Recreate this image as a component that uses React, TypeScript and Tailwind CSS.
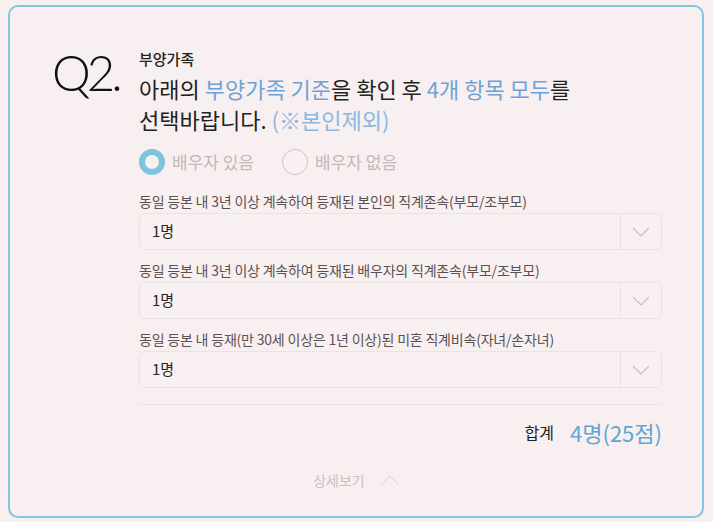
import React, { useState } from 'react';

const KR = { fontFamily: '"Noto Sans CJK KR", "Noto Sans", sans-serif' };

const ChevronDown = () => (
  <svg width="20" height="12" viewBox="0 0 20 12" fill="none">
    <path d="M2 2 L10 10 L18 2" stroke="#c9bfbf" strokeWidth="1.2" />
  </svg>
);

const ChevronUp = () => (
  <svg width="22" height="12" viewBox="0 0 22 12" fill="none">
    <path d="M2 11 L11 2 L20 11" stroke="#e6dcdc" strokeWidth="1.2" />
  </svg>
);

interface FieldProps {
  label: React.ReactNode;
  value: string;
}

const Field: React.FC<FieldProps> = ({ label, value }) => (
  <div className="flex flex-col">
    <div className="text-[14px] leading-[18px] text-[#5a5252] mb-[3px] tracking-[-0.2px]">{label}</div>
    <div className="flex h-[37px] rounded-[6px] border border-[#ebe2e3] bg-[#f8f0f1]">
      <div className="flex-1 flex items-center pl-[12px] text-[15px] text-[#2a2525]">{value}</div>
      <div className="w-[41px] border-l border-[#ebe2e3] flex items-center justify-center">
        <ChevronDown />
      </div>
    </div>
  </div>
);

const Radio: React.FC<{ checked: boolean; label: string; onClick: () => void }> = ({ checked, label, onClick }) => (
  <button type="button" onClick={onClick} className="flex items-center gap-[7px]">
    {checked ? (
      <span className="w-[26px] h-[26px] rounded-full border-[6px] border-[#7fc4de] bg-[#f8f0f1]" />
    ) : (
      <span className="w-[26px] h-[26px] rounded-full border border-[#cfc5c5] bg-[#f8f0f1]" />
    )}
    <span className="text-[17px] text-[#c4b8b8]">{label}</span>
  </button>
);

export default function App() {
  const [spouse, setSpouse] = useState(true);

  return (
    <div className="w-[713px] h-[522px] bg-[#f8eff0] pt-[5px] pl-[8px]" style={KR}>
      <div className="w-[696px] h-[513px] rounded-[10px] border-2 border-[#80c6de] flex pl-[42px] pr-[40px] pt-[42px]">
        <div className="w-[87px] shrink-0">
          <div
            className="text-[49px] leading-[50px] font-light text-[#111] tracking-[-4px] -mt-[2px]"
            style={{ fontFamily: 'Lato, sans-serif' }}
          >
            Q2.
          </div>
        </div>
        <div className="flex-1 flex flex-col">
          <div className="text-[15px] leading-[20px] font-medium text-[#222]">부양가족</div>
          <div className="text-[22px] leading-[31px] text-[#222] mt-[4px]">
            아래의 <span className="text-[#6ea3d8]">부양가족 기준</span>을 확인 후{' '}
            <span className="text-[#6ea3d8]">4개 항목 모두</span>를
            <br />
            선택바랍니다. <span className="text-[#8bb8e3]">(※본인제외)</span>
          </div>
          <div className="flex gap-[28px] mt-[14px]">
            <Radio checked={spouse} label="배우자 있음" onClick={() => setSpouse(true)} />
            <Radio checked={!spouse} label="배우자 없음" onClick={() => setSpouse(false)} />
          </div>
          <div className="flex flex-col gap-[11px] mt-[17px]">
            <Field label="동일 등본 내 3년 이상 계속하여 등재된 본인의 직계존속(부모/조부모)" value="1명" />
            <Field label="동일 등본 내 3년 이상 계속하여 등재된 배우자의 직계존속(부모/조부모)" value="1명" />
            <Field label="동일 등본 내 등재(만 30세 이상은 1년 이상)된 미혼 직계비속(자녀/손자녀)" value="1명" />
          </div>
          <div className="h-px bg-[#ebe2e3] mt-[16px]" />
          <div className="flex justify-end items-center mt-[13px] h-[28px] gap-[16px]">
            <span className="text-[16px] text-[#222]">합계</span>
            <span className="text-[22px] text-[#5fa7d5]">4명(25점)</span>
          </div>
          <div className="flex justify-center items-center gap-[14px] mt-[24px] -ml-[87px] h-[20px]">
            <span className="text-[14px] text-[#cbbfbf]">상세보기</span>
            <ChevronUp />
          </div>
        </div>
      </div>
    </div>
  );
}
